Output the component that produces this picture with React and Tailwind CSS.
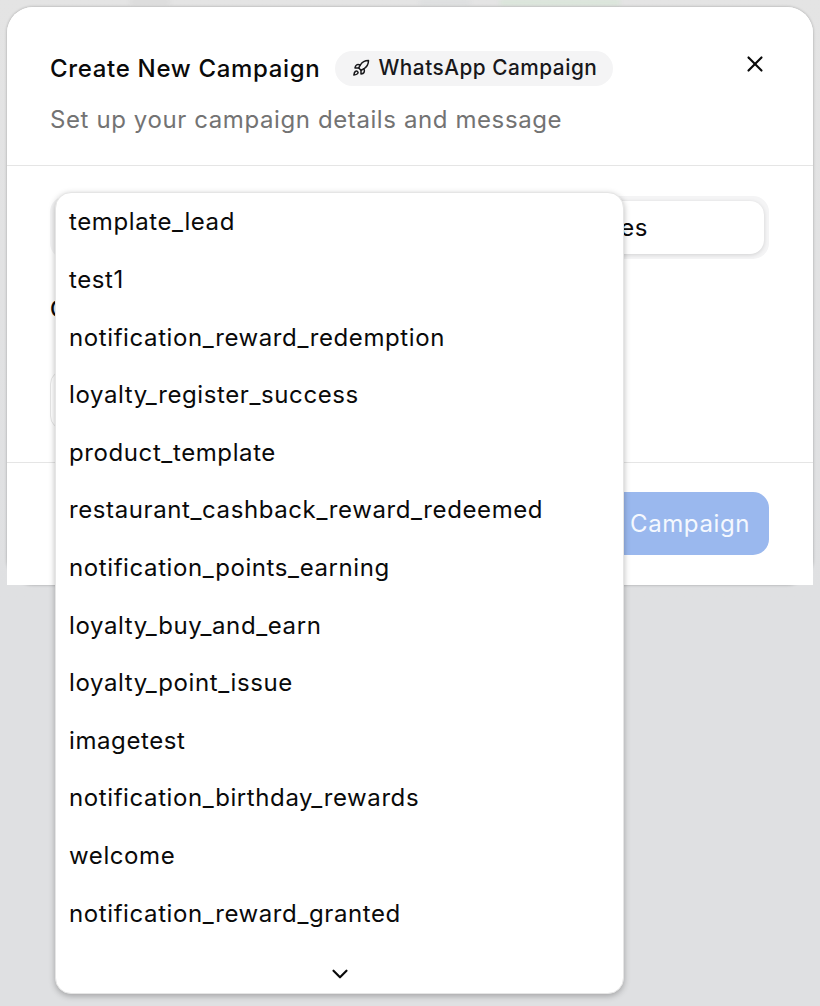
import { Rocket, X, ChevronDown } from "lucide-react";

const items = [
  "template_lead",
  "test1",
  "notification_reward_redemption",
  "loyalty_register_success",
  "product_template",
  "restaurant_cashback_reward_redeemed",
  "notification_points_earning",
  "loyalty_buy_and_earn",
  "loyalty_point_issue",
  "imagetest",
  "notification_birthday_rewards",
  "welcome",
  "notification_reward_granted",
];

export default function App() {
  return (
    <div className="relative h-[1006px] w-[820px] overflow-hidden bg-[#dfe0e2] font-['Inter',sans-serif] tracking-[0.6px] text-[#0a0a0a] [font-optical-sizing:none]">
      <div className="absolute inset-x-0 top-0 h-[600px] bg-gradient-to-b from-[#e4e4e4] to-[#dfe0e2]" />
      <div className="absolute left-[130px] top-0 h-[4px] w-[40px] bg-[#d8d8d8] blur-[2px]" />
      <div className="absolute left-[420px] top-0 h-[5px] w-[50px] bg-[#dcdedf] blur-[2px]" />
      <div className="absolute left-[500px] top-0 h-[5px] w-[120px] bg-[#d8e6d8] blur-[2px]" />

      <div className="relative ml-[7px] mt-[7px] w-[806px] rounded-[26px] bg-white shadow-[0_0_3px_rgba(0,0,0,0.3)]">
        <header className="h-[159px] rounded-t-[26px] border-b border-[#e5e5e5] bg-white pl-[43px] pr-[43px] pt-[44px]">
          <div className="flex h-[36px] items-center">
            <h2 className="text-[24px] font-medium leading-[36px] tracking-[0.68px]">Create New Campaign</h2>
            <span className="ml-[14px] -mt-[2px] flex h-[35px] w-[278px] items-center rounded-full bg-[#f4f4f5] pl-[17px] text-[20.8px] font-medium tracking-[0.5px] text-[#18181b]">
              <Rocket className="mr-[9px] size-[18px] shrink-0" strokeWidth={2} />
              <span className="whitespace-nowrap">WhatsApp Campaign</span>
            </span>
            <button className="ml-auto -mt-[10px] mr-[2px] text-[#0a0a0a]">
              <X className="size-[26px]" strokeWidth={2} />
            </button>
          </div>
          <p className="mt-[15px] text-[24px] leading-[36px] text-[#737373]">Set up your campaign details and message</p>
        </header>

        <section className="h-[296px] bg-white px-[43px] pt-[30px]">
          <div className="flex h-[63px] w-[719px] rounded-[16px] bg-[#f4f4f5] p-[5px]">
            <div className="flex-1 text-center text-[22.4px] leading-[53px]">Message</div>
            <div className="flex w-[354px] items-center justify-center rounded-[14px] bg-white text-[24px] shadow-[0_1px_4px_rgba(0,0,0,0.14)]">
              <span className="w-[250px] text-center">Templates</span>
            </div>
          </div>
          <label className="mt-[32px] block text-[22.4px] font-medium leading-[36px]">Campaign Name</label>
          <div className="mt-[43px] h-[60px] w-[57px] rounded-[14px] border border-[#e5e5e5]" />
        </section>

        <footer className="flex h-[123px] items-start justify-end border-t border-[#e5e5e5] bg-white pr-[44px] pt-[29px]">
          <button className="h-[63px] rounded-[16px] bg-[#9ab8ee] px-[19px] pt-[1px] text-[24px] font-normal text-[#f5f8fe]">
            Create Campaign
          </button>
        </footer>
      </div>

      <div className="absolute left-[55px] top-[192px] h-[802px] w-[569px] overflow-hidden rounded-[16px] border border-[#e5e5e5] bg-white pt-[0.6px] shadow-[0_2px_6px_rgba(0,0,0,0.28)]">
        {items.map((item) => (
          <div key={item} className="flex h-[57.6px] items-center whitespace-nowrap pl-[13px] text-[24px]">
            {item}
          </div>
        ))}
        <div className="flex h-[43px] items-center justify-center pt-[20px]">
          <ChevronDown className="size-[26px]" strokeWidth={2} />
        </div>
      </div>
    </div>
  );
}
